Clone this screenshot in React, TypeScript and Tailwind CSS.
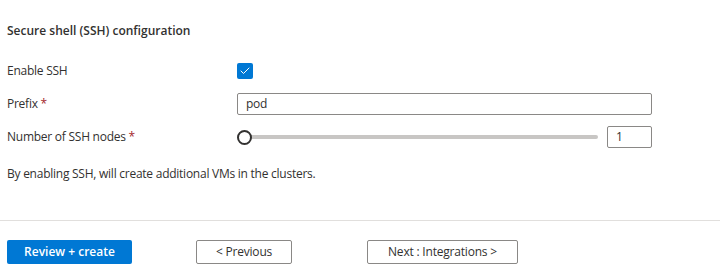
import { Check } from 'lucide-react';

const font = { fontFamily: '"Open Sans", "Noto Sans", sans-serif' };

function Label({ text, required }: { text: string; required?: boolean }) {
    return (
        <div className="w-[230px] shrink-0 text-[12px] leading-[18px] tracking-[-0.25px] text-[#323130]">
            {text}
            {required && <span className="text-[#a4262c]"> *</span>}
        </div>
    );
}

export default function App() {
    return (
        <div className="w-[720px] h-[274px] bg-white" style={font}>
            <div className="px-[7px]">
                <div className="h-[60px] pt-[22px] text-[12px] leading-[18px] font-semibold text-[#323130]">
                    Secure shell (SSH) configuration
                </div>

                <div className="flex items-center h-[22px]">
                    <Label text="Enable SSH" />
                    <div className="w-4 h-4 rounded-[2px] bg-[#0078d4] flex items-center justify-center">
                        <Check className="w-3 h-3 text-white" strokeWidth={2} />
                    </div>
                </div>

                <div className="flex items-center h-[22px] mt-[11px]">
                    <Label text="Prefix" required />
                    <div className="w-[415px] h-[22px] border border-[#8a8886] rounded-[2px] px-[8px] text-[12px] leading-[20px] tracking-[-0.25px] text-[#323130]">
                        pod
                    </div>
                </div>

                <div className="flex items-center h-[22px] mt-[11px]">
                    <Label text="Number of SSH nodes" required />
                    <div className="relative w-[362px] h-[22px] flex items-center">
                        <div className="ml-[8px] w-[353px] h-[4px] rounded-full bg-[#c8c6c4]" />
                        <div className="absolute left-0 top-[4px] w-[15px] h-[15px] rounded-full border-2 border-[#323130] bg-white" />
                    </div>
                    <div className="ml-[8px] w-[45px] h-[22px] border border-[#8a8886] rounded-[2px] px-[8px] text-[12px] leading-[20px] text-[#323130]">
                        1
                    </div>
                </div>

                <div className="mt-[17px] text-[12px] leading-[18px] tracking-[-0.25px] text-[#323130]">
                    By enabling SSH, will create additional VMs in the clusters.
                </div>
            </div>

            <div className="mt-[37px] h-px bg-[#e1dfdd]" />

            <div className="flex items-center px-[7px] mt-[19px]">
                <button className="w-[125px] h-[24px] rounded-[2px] bg-[#0078d4] text-white text-[12px] font-semibold">
                    Review + create
                </button>
                <button className="ml-[64px] w-[96px] h-[24px] rounded-[2px] border border-[#8a8886] bg-white text-[#323130] text-[12px] tracking-[-0.2px]">
                    &lt; Previous
                </button>
                <button className="ml-[75px] w-[151px] h-[24px] rounded-[2px] border border-[#8a8886] bg-white text-[#323130] text-[12px] tracking-[-0.2px]">
                    Next : Integrations &gt;
                </button>
            </div>
        </div>
    );
}
